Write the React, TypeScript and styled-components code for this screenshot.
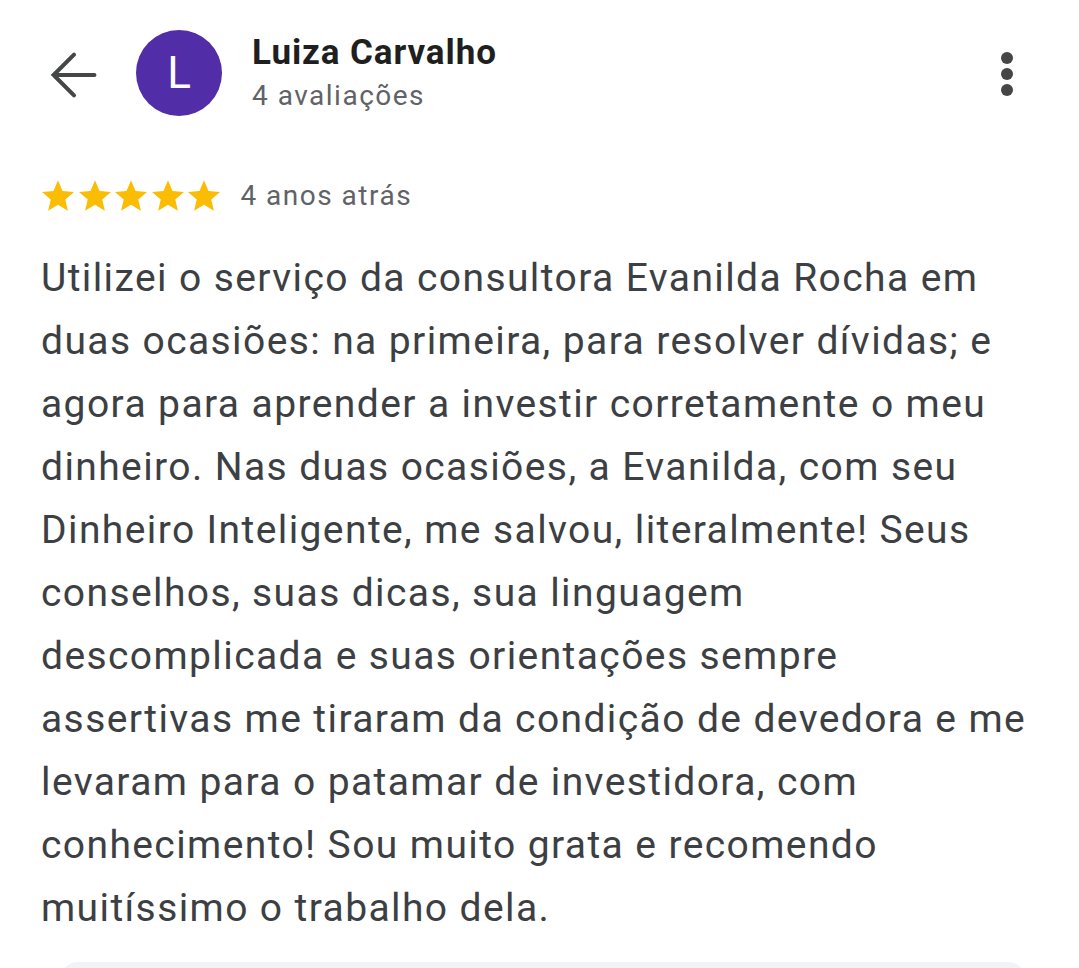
import styled, { createGlobalStyle } from 'styled-components';

const GlobalStyle = createGlobalStyle`
  html, body {
    margin: 0;
    padding: 0;
    background: #ffffff;
  }
  body {
    font-family: Roboto, "Noto Sans", Arial, sans-serif;
    color: #3c4043;
  }
`;

const Page = styled.div`
  width: 1079px;
  height: 968px;
  overflow: hidden;
  background: #ffffff;
`;

const Header = styled.div`
  display: flex;
  align-items: flex-start;
  padding: 30px 66px 0 39px;
`;

const BackButton = styled.div`
  width: 70px;
  height: 70px;
  margin-top: 10px;
  display: flex;
  align-items: center;
  justify-content: center;
`;

const Avatar = styled.div`
  width: 86px;
  height: 86px;
  margin-left: 27px;
  border-radius: 50%;
  background: #512da8;
  color: #ffffff;
  display: flex;
  align-items: center;
  justify-content: center;
  font-size: 44px;
  font-weight: 400;
`;

const Who = styled.div`
  margin: 2px 0 0 30px;
  flex: 1;
  display: flex;
  flex-direction: column;
  gap: 4px;
`;

const Name = styled.div`
  font-size: 35px;
  font-weight: 700;
  letter-spacing: 0.9px;
  color: #1f1f1f;
  line-height: 42px;
`;

const Count = styled.div`
  font-size: 28px;
  letter-spacing: 1.5px;
  color: #5f6368;
  line-height: 36px;
`;

const Dots = styled.div`
  margin-top: 22px;
  display: flex;
  flex-direction: column;
  gap: 4px;
`;

const Dot = styled.span`
  width: 12px;
  height: 12px;
  border-radius: 50%;
  background: #444746;
`;

const RatingRow = styled.div`
  display: flex;
  align-items: center;
  padding: 64px 0 0 42px;
`;

const Stars = styled.div`
  display: flex;
  gap: 4.6px;
`;

const When = styled.span`
  margin-left: 20px;
  font-size: 28px;
  line-height: 31px;
  letter-spacing: 1.5px;
  color: #5f6368;
`;

const Body = styled.p`
  margin: 36px 0 0 41px;
  font-size: 39px;
  line-height: 63px;
  letter-spacing: 1.4px;
  white-space: nowrap;
  color: #3c4043;
`;

const Footer = styled.div`
  margin: 22px 53px 0 60px;
  height: 40px;
  border-radius: 18px;
  background: #f1f3f4;
`;

const lines = [
  'Utilizei o serviço da consultora Evanilda Rocha em',
  'duas ocasiões: na primeira, para resolver dívidas; e',
  'agora para aprender a investir corretamente o meu',
  'dinheiro. Nas duas ocasiões, a Evanilda, com seu',
  'Dinheiro Inteligente, me salvou, literalmente! Seus',
  'conselhos, suas dicas, sua linguagem',
  'descomplicada e suas orientações sempre',
  'assertivas me tiraram da condição de devedora e me',
  'levaram para o patamar de investidora, com',
  'conhecimento! Sou muito grata e recomendo',
  'muitíssimo o trabalho dela.',
];

function Star() {
  return (
    <svg width="32" height="31" viewBox="2 2 20 19">
      <path
        fill="#fbbc04"
        d="M12 17.27L18.18 21l-1.64-7.03L22 9.24l-7.19-.61L12 2 9.19 8.63 2 9.24l5.46 4.73L5.82 21z"
      />
    </svg>
  );
}

export default function App() {
  return (
    <Page>
      <GlobalStyle />
      <Header>
        <BackButton>
          <svg width="70" height="70" viewBox="0 0 24 24" fill="none">
            <path
              d="M19 12H5M12 19l-7-7 7-7"
              stroke="#444746"
              strokeWidth="1.4"
              strokeLinecap="round"
              strokeLinejoin="miter"
            />
          </svg>
        </BackButton>
        <Avatar>L</Avatar>
        <Who>
          <Name>Luiza Carvalho</Name>
          <Count>4 avaliações</Count>
        </Who>
        <Dots>
          <Dot />
          <Dot />
          <Dot />
        </Dots>
      </Header>
      <RatingRow>
        <Stars>
          {[0, 1, 2, 3, 4].map((i) => (
            <Star key={i} />
          ))}
        </Stars>
        <When>4 anos atrás</When>
      </RatingRow>
      <Body>
        {lines.map((line, i) => (
          <span key={i}>
            {line}
            {i < lines.length - 1 && <br />}
          </span>
        ))}
      </Body>
      <Footer />
    </Page>
  );
}
